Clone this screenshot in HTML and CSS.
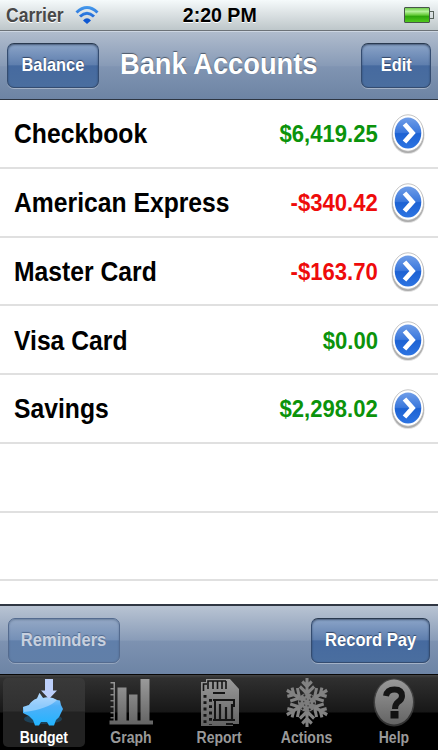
FILE: index.html
```html
<!DOCTYPE html>
<html lang="en">
<head>
    <meta charset="UTF-8">
    <meta name="viewport" content="width=device-width, initial-scale=1.0">
    <title>Bank Accounts</title>
    <link rel="stylesheet" href="styles.css">
</head>
<body>
    <!-- Shared gradients and symbols -->
    <svg class="defs" width="0" height="0">
        <defs>
            <linearGradient id="gray" x1="0" y1="0" x2="0" y2="48" gradientUnits="userSpaceOnUse">
                <stop offset="0" stop-color="#9b9b9b"/>
                <stop offset="1" stop-color="#626262"/>
            </linearGradient>
            <linearGradient id="disc" x1="0" y1="0" x2="0" y2="1">
                <stop offset="0" stop-color="#6f9de8"/>
                <stop offset=".48" stop-color="#3b78dc"/>
                <stop offset=".52" stop-color="#1d62d3"/>
                <stop offset="1" stop-color="#2d74e2"/>
            </linearGradient>
            <linearGradient id="pig" x1="0" y1="0" x2="0" y2="1">
                <stop offset="0" stop-color="#9fd0fc"/>
                <stop offset=".4" stop-color="#4fb0f8"/>
                <stop offset="1" stop-color="#22b4ff"/>
            </linearGradient>
            <linearGradient id="wave" x1="0" y1="0" x2="0" y2="18" gradientUnits="userSpaceOnUse">
                <stop offset="0" stop-color="#4ba0ee"/>
                <stop offset="1" stop-color="#0d4fce"/>
            </linearGradient>
        </defs>
        <symbol id="disclosure" viewBox="0 0 36 42">
            <ellipse cx="18" cy="22.500" rx="16.600" ry="18.600" fill="#000" opacity=".12"/>
            <ellipse cx="18" cy="21.600" rx="16.100" ry="18.500" fill="#777" opacity=".5"/>
            <ellipse cx="18" cy="20" rx="15.600" ry="18.200" fill="#fff" stroke="#b5b5b5" stroke-width=".8"/>
            <ellipse cx="18" cy="20" rx="13.300" ry="15.600" fill="url(#disc)"/>
            <path d="M14.500 11L22.500 20L14.500 29" fill="none" stroke="#fff" stroke-width="4.800"/>
        </symbol>
    </svg>

    <div class="phone">
        <div class="status-bar">
            <div class="status-left">
                <span class="text carrier">Carrier</span>
                <svg class="wifi" width="24" height="20" viewBox="0 0 24 20" fill="none" stroke="url(#wave)" stroke-width="3">
                    <path d="M1.500 7.500Q12 -2.500 22.500 7.500"/>
                    <path d="M5 11.500Q12 5 19 11.500"/>
                    <path d="M8 15.500Q12 11 16 15.500L12 19Z" fill="#0d57d2" stroke="none"/>
                </svg>
            </div>
            <span class="text clock">2:20 PM</span>
            <div class="battery"><div class="battery-level"></div></div>
        </div>

        <div class="nav-bar">
            <button class="button balance"><span class="text">Balance</span></button>
            <h1><span class="text">Bank Accounts</span></h1>
            <button class="button edit"><span class="text">Edit</span></button>
        </div>

        <ul class="accounts">
            <li>
                <span class="text name">Checkbook</span>
                <span class="text amount">$6,419.25</span>
                <svg class="arrow"><use href="#disclosure"/></svg>
            </li>
            <li>
                <span class="text name">American Express</span>
                <span class="text amount negative">-$340.42</span>
                <svg class="arrow"><use href="#disclosure"/></svg>
            </li>
            <li>
                <span class="text name">Master Card</span>
                <span class="text amount negative">-$163.70</span>
                <svg class="arrow"><use href="#disclosure"/></svg>
            </li>
            <li>
                <span class="text name">Visa Card</span>
                <span class="text amount">$0.00</span>
                <svg class="arrow"><use href="#disclosure"/></svg>
            </li>
            <li>
                <span class="text name">Savings</span>
                <span class="text amount">$2,298.02</span>
                <svg class="arrow"><use href="#disclosure"/></svg>
            </li>
            <li></li>
            <li></li>
        </ul>

        <div class="toolbar">
            <button class="button reminders" disabled><span class="text">Reminders</span></button>
            <button class="button record"><span class="text">Record Pay</span></button>
        </div>

        <div class="tab-bar">
            <div class="tab active">
                <svg width="48" height="50" viewBox="0 0 48 50">
                    <ellipse cx="23" cy="41" rx="19" ry="5" fill="#1490dc" opacity=".3"/>
                    <path d="M3 29L9 27Q12 22 17 20.500L19.500 15L23 20Q31 18 37 22L40 22.500L41 27L43 31L41 35Q40 39 36 42L34 47.500H29L27 44H21L19 47.500H15L13 42L9 38L3 35Z" fill="url(#pig)"/>
                    <path d="M3 29L9 27Q12 22 17 20.500L19.500 15L23 20Q31 18 37 22Q28 31 4 34Z" fill="#d0e5ff" opacity=".5"/>
                    <path d="M25 1H33V12.500H37L29 21L21 12.500H25Z" fill="#bccffa"/>
                </svg>
                <span class="text">Budget</span>
            </div>
            <div class="tab">
                <svg width="48" height="50" viewBox="0 0 48 50">
                    <g fill="url(#gray)">
                        <path d="M2.500 42.500H46V46.500H2.500ZM10.500 9.500H19.500V43H10.500ZM22 16.500H30.500V43H22ZM33.500 1H42.500V43H33.500Z"/>
                        <path d="M6.500 4H8V43H6.500ZM3.500 4H7V5.500H3.500ZM3.500 10H7V11.500H3.500ZM3.500 16H7V17.500H3.500ZM3.500 22H7V23.500H3.500ZM3.500 28H7V29.500H3.500ZM3.500 34H7V35.500H3.500ZM3.500 39H7V40.500H3.500Z"/>
                    </g>
                </svg>
                <span class="text">Graph</span>
            </div>
            <div class="tab">
                <svg width="48" height="50" viewBox="0 0 48 50">
                    <path d="M11 1H35L44 11V46H38V48H6V4H11Z" fill="url(#gray)"/>
                    <g fill="none" stroke="#151515">
                        <path d="M8.500 13V6H12M13 11V3H31M18 3V11M22.500 3V11M27 3V11M31 3V11" stroke-width="1.600"/>
                        <path d="M18 15H30M18 22H40M20 22V42M39 22V29M18 42H40M31 46H38" stroke-width="2"/>
                        <path d="M25 26V41M31 29V41M37 26V41" stroke-width="2.200"/>
                        <path d="M10 17V46M15.500 21V47" stroke-width="3" stroke-dasharray="2.800 3.500"/>
                    </g>
                </svg>
                <span class="text">Report</span>
            </div>
            <div class="tab">
                <svg width="48" height="50" viewBox="0 0 48 50">
                    <defs>
                        <g id="branch">
                            <path d="M0 0V-24.500M-5 -21L0 -16L5 -21M-7.500 -16L0 -9L7.500 -16"/>
                        </g>
                    </defs>
                    <g transform="translate(24 24.500) scale(.95 1)" fill="none" stroke="#828282" stroke-width="3.200">
                        <use href="#branch"/>
                        <use href="#branch" transform="rotate(60)"/>
                        <use href="#branch" transform="rotate(120)"/>
                        <use href="#branch" transform="rotate(180)"/>
                        <use href="#branch" transform="rotate(240)"/>
                        <use href="#branch" transform="rotate(300)"/>
                        <circle r="9.500" fill="#7d7d7d" stroke="none"/>
                        <circle r="7.500" stroke="#292929" stroke-width="1.800" stroke-dasharray="1.800 6.054"/>
                        <circle r="3.500" stroke="#333" stroke-width="1.200" stroke-dasharray="1.200 2.465"/>
                    </g>
                </svg>
                <span class="text">Actions</span>
            </div>
            <div class="tab">
                <svg width="48" height="50" viewBox="0 0 48 50">
                    <ellipse cx="24" cy="24.500" rx="20.500" ry="24" fill="#555" opacity=".6"/>
                    <ellipse cx="24" cy="24" rx="19" ry="22.500" fill="url(#gray)"/>
                    <path d="M16 18Q17 11.500 24.500 11.500Q32 11.500 32 18Q32 21.500 28 24Q25 26.500 25 31" fill="none" stroke="#151515" stroke-width="6"/>
                    <rect x="20.500" y="33" width="8" height="7.500" fill="#111"/>
                </svg>
                <span class="text">Help</span>
            </div>
        </div>
    </div>
</body>
</html>
```
FILE: styles.css
```css
* {
    box-sizing: border-box;
}
body {
    margin: 0;
    background-color: #fff;
    font-family: "Liberation Sans", Arial, sans-serif;
    font-weight: bold;
}
.defs {
    display: block;
}
.phone {
    display: flex;
    flex-direction: column;
    width: 438px;
    height: 750px;
    overflow: hidden;
}
/* Narrow lettering used all over the app */
.text {
    display: inline-block;
    white-space: nowrap;
    transform: scaleX(0.9);
}

.status-bar {
    display: grid;
    grid-template-columns: 1fr auto 1fr;
    align-items: center;
    height: 31px;
    padding: 0 4px 0 6px;
    border-bottom: 1px solid #6c7278;
    background: linear-gradient(#f5fafb, #dce2e4 45%, #bec7ca);
}
.status-left {
    display: flex;
    align-items: center;
}
.carrier {
    width: 69px;
    font-size: 19.500px;
    color: #484848;
    transform-origin: left;
    text-shadow: 0 1px 0 #fff;
}
.wifi {
    margin-top: -1px;
}
.clock {
    font-size: 20.500px;
    color: #000;
    transform: scaleX(0.955);
    text-shadow: 0 1px 0 #fff;
}
.battery {
    display: flex;
    align-items: center;
    justify-self: end;
}
.battery-level {
    width: 26px;
    height: 16px;
    border: 1px solid #46564a;
    border-radius: 1px;
    background: linear-gradient(#72ce4d, #b5f19b 25%, #66cb39 50%, #2ea70b 60%, #50c91d);
}
.battery::after {
    content: "";
    width: 3px;
    height: 6px;
    border: 1px solid #56615a;
    border-left: none;
}

.nav-bar {
    display: flex;
    align-items: center;
    justify-content: space-between;
    height: 69px;
    padding: 0 7px;
    border-top: 1px solid #cdd6e2;
    border-bottom: 1px solid #2d3642;
    background: linear-gradient(#b0bccd, #889bb7 50%, #8094b2 52%, #6d84a4);
}
h1 {
    display: flex;
    justify-content: center;
    flex: 1;
    margin: 0;
    padding-bottom: 3px;
    font-size: 30.300px;
    line-height: 34px;
    color: #fff;
    text-shadow: 0 -1px 1px #4c5869;
}
h1 .text {
    margin-left: -23px;
}

.button {
    display: flex;
    align-items: center;
    justify-content: center;
    flex-shrink: 0;
    height: 45px;
    padding: 0;
    border: 1px solid #344c70;
    border-top-color: #29394f;
    border-radius: 7px;
    background: linear-gradient(#8ba4c8, #5f7fae 48%, #466a9f 51%, #4a6e9f);
    box-shadow: inset 0 1px 2px rgba(25, 40, 65, 0.6), 0 1px 0 rgba(255, 255, 255, 0.35);
    font: bold 18.200px "Liberation Sans", Arial, sans-serif;
    color: #fff;
    text-shadow: 0 -1px 1px #344766;
}
.balance {
    width: 92px;
}
.edit {
    width: 70px;
}

.accounts {
    flex: 1;
    min-height: 0;
    margin: 0;
    padding: 0;
    overflow: hidden;
    list-style: none;
}
.accounts li {
    display: flex;
    align-items: center;
    height: 68.750px;
    padding: 2px 12px 0 14px;
    border-bottom: 2px solid #e0e0e0;
}
.name {
    flex: 1;
    font-size: 27.600px;
    color: #000;
    transform: scaleX(0.895);
    transform-origin: left;
}
.amount {
    margin-right: 12px;
    font-size: 24px;
    color: #0b930b;
    transform: scaleX(0.92);
    transform-origin: right;
}
.negative {
    color: #ee0b0b;
}
.arrow {
    flex-shrink: 0;
    width: 36px;
    height: 42px;
}

.toolbar {
    display: flex;
    align-items: center;
    justify-content: space-between;
    height: 70px;
    padding: 0 8px;
    border-top: 2px solid #303743;
    background: linear-gradient(#b9c4d3, #899cb8 50%, #7d92b1 52%, #6d84a5);
}
.toolbar .button {
    font-size: 18.400px;
}
.reminders {
    width: 112px;
}
.record {
    width: 119px;
}
.button:disabled {
    border-color: #546b8f;
    background: linear-gradient(#94a8c5, #7590b7 48%, #607faa 51%, #617fa8);
    box-shadow: inset 0 1px 2px rgba(50, 70, 100, 0.4), 0 1px 0 rgba(255, 255, 255, 0.25);
    color: #c7d0df;
    text-shadow: 0 -1px 1px #526a8e;
}

.tab-bar {
    display: flex;
    height: 76px;
    padding-top: 2px;
    border-top: 1px solid #070707;
    background: linear-gradient(#444 0, #303030 3px, #171717 37px, #000 38px, #000);
}
.tab {
    display: flex;
    flex: 1;
    flex-direction: column;
    align-items: center;
    height: 69px;
    margin: 1px 3px 0;
    border-radius: 5px;
    font-size: 15.600px;
    line-height: 20px;
    color: #999;
}
.tab svg {
    flex-shrink: 0;
}
.active {
    background: linear-gradient(#393939, #303030 33px, #222 34px, #222);
    color: #fff;
}
```
